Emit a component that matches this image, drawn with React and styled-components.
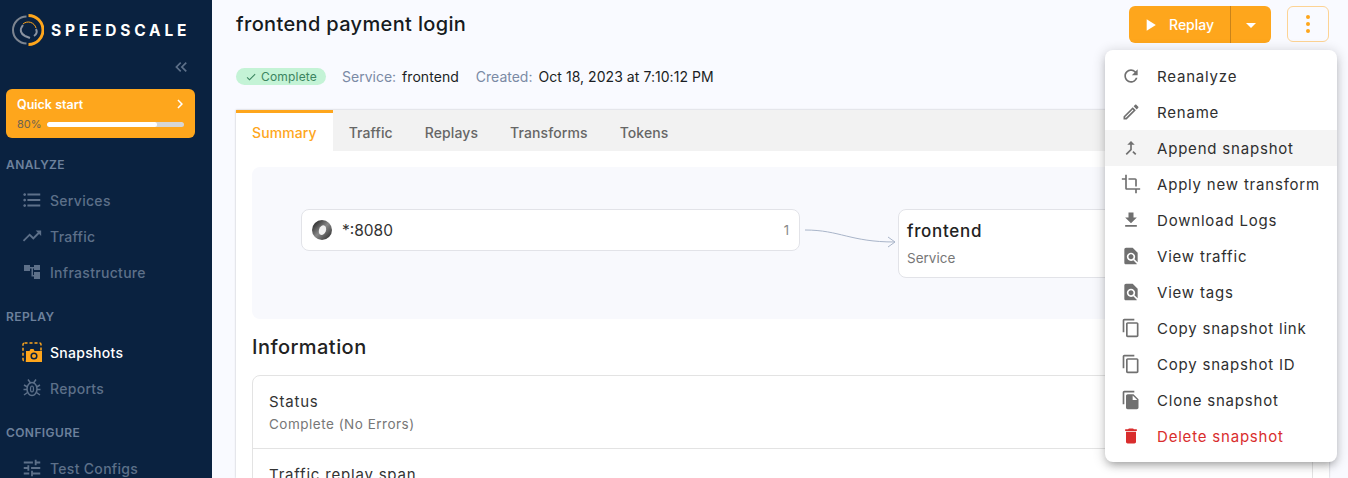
import React from 'react';
import styled, { createGlobalStyle } from 'styled-components';
import {
  MdRefresh, MdOutlineEdit, MdMergeType, MdCrop, MdFileDownload, MdFindInPage, MdContentCopy,
  MdFileCopy, MdDelete, MdFormatListBulleted, MdTrendingUp, MdTune, MdPlayArrow,
  MdArrowDropDown, MdCheck, MdKeyboardDoubleArrowLeft, MdChevronRight,
} from 'react-icons/md';

const Global = createGlobalStyle`
  html, body { margin: 0; padding: 0; height: 100%; overflow: hidden; }
  body { font-family: Inter, "Open Sans", "Liberation Sans", sans-serif; background: #f9faff; }
  * { box-sizing: border-box; }
`;

const Page = styled.div`
  display: flex;
  width: 1348px;
  height: 478px;
  overflow: hidden;
  position: relative;
`;

const Sidebar = styled.aside`
  width: 212px;
  flex: none;
  background: #0a2240;
  padding: 0 6px;
  display: flex;
  flex-direction: column;
  overflow: hidden;
`;

const LogoRow = styled.div`
  height: 60px;
  flex: none;
  padding-left: 6px;
  display: flex;
  align-items: center;
  gap: 7px;
`;

const LogoText = styled.span`
  color: #fff;
  font-size: 15.5px;
  font-weight: 700;
  letter-spacing: 3.8px;
  white-space: nowrap;
`;

const CollapseRow = styled.div`
  display: flex;
  flex: none;
  justify-content: flex-end;
  padding-right: 15px;
  height: 32px;
  margin-top: -3px;
  color: #5d7089;
  font-size: 20px;
  align-items: flex-start;
`;

const QuickStart = styled.div`
  width: 189px;
  height: 49px;
  flex: none;
  background: #fea61c;
  border-radius: 6px;
  padding: 7px 11px;
  display: flex;
  flex-direction: column;
  gap: 5px;
`;

const QuickTop = styled.div`
  display: flex;
  justify-content: space-between;
  align-items: center;
  color: #fff;
  font-size: 12.5px;
  font-weight: 600;
  height: 16px;
`;

const QuickBottom = styled.div`
  display: flex;
  align-items: center;
  gap: 5px;
  font-size: 11px;
  color: #6d6350;
`;

const Track = styled.div`
  flex: 1;
  height: 5px;
  border-radius: 3px;
  background: #d6d6d6;
  overflow: hidden;
`;

const Fill = styled.div`
  height: 100%;
  border-radius: 3px;
  background: #fff;
`;

const SectionLabel = styled.div`
  color: #6d819c;
  font-size: 12px;
  font-weight: 600;
  letter-spacing: 0.4px;
  height: 16px;
  flex: none;
  line-height: 16px;
  margin-top: ${(p) => p.$top}px;
  margin-bottom: 9px;
`;

const NavItem = styled.div`
  height: 36px;
  flex: none;
  display: flex;
  align-items: center;
  padding-left: 16px;
  gap: 8px;
  font-size: 14px;
  letter-spacing: 0.3px;
  font-weight: 500;
  color: ${(p) => (p.$active ? '#fff' : '#5d7089')};
`;

const NavIcon = styled.span`
  width: 20px;
  height: 20px;
  display: flex;
  align-items: center;
  justify-content: center;
  font-size: 22px;
  flex: none;
`;

const Main = styled.main`
  flex: 1;
  padding: 0 19px 0 24px;
  display: flex;
  flex-direction: column;
  min-width: 0;
`;

const Header = styled.header`
  height: 50px;
  flex: none;
  padding-top: 6px;
  display: flex;
  justify-content: space-between;
  align-items: flex-start;
`;

const Title = styled.h1`
  margin: 0;
  font-size: 20px;
  letter-spacing: 0.35px;
  font-weight: 500;
  line-height: 37px;
  color: #161a20;
`;

const Actions = styled.div`
  display: flex;
  gap: 16px;
`;

const SplitButton = styled.div`
  width: 142px;
  height: 37px;
  display: flex;
  background: #fea61c;
  border-radius: 6px;
  color: #fff;
`;

const ReplayPart = styled.div`
  width: 102px;
  display: flex;
  align-items: center;
  padding-left: 11px;
  gap: 9px;
  font-size: 14px;
  font-weight: 500;
  border-right: 1px solid #c9831a;
`;

const CaretPart = styled.div`
  flex: 1;
  display: flex;
  align-items: center;
  justify-content: center;
  font-size: 24px;
`;

const KebabButton = styled.div`
  width: 42px;
  height: 36px;
  border: 1px solid #fdd394;
  border-radius: 6px;
  display: flex;
  flex-direction: column;
  align-items: center;
  justify-content: center;
  gap: 3px;
`;

const Dot = styled.span`
  width: 4px;
  height: 4px;
  border-radius: 50%;
  background: #fea61c;
`;

const MetaRow = styled.div`
  margin-top: 18px;
  height: 17px;
  flex: none;
  display: flex;
  align-items: center;
  font-size: 14px;
`;

const Chip = styled.span`
  width: 90px;
  height: 17px;
  border-radius: 9px;
  background: #c4f3d6;
  color: #3b8560;
  font-size: 12px;
  letter-spacing: 0.2px;
  display: flex;
  align-items: center;
  justify-content: center;
  gap: 4px;
  margin-right: 16px;
`;

const MetaLabel = styled.span`
  color: #7b8aa5;
  margin-right: 6px;
`;

const MetaValue = styled.span`
  color: #1b1e24;
  letter-spacing: 0.05px;
  margin-right: 17px;
`;

const TabsBox = styled.section`
  margin-top: 25px;
  width: 1093px;
  flex: 1;
  background: #fff;
  box-shadow: 0 0 2px rgba(0, 0, 0, 0.25);
  min-height: 0;
`;

const TabBar = styled.div`
  height: 41px;
  background: #f2f2f2;
  display: flex;
`;

const Tab = styled.div`
  padding: 0 16px;
  display: flex;
  align-items: center;
  font-size: 14px;
  letter-spacing: 0.1px;
  font-weight: 500;
  color: ${(p) => (p.$active ? '#fea61c' : '#666')};
  background: ${(p) => (p.$active ? '#fff' : 'transparent')};
  border-top: 3px solid ${(p) => (p.$active ? '#fea61c' : 'transparent')};
`;

const TabBody = styled.div`
  padding: 16px 16px 0;
`;

const GraphPanel = styled.div`
  height: 152px;
  border-radius: 8px;
  background: #f8f9fd;
  padding: 42px 0 0 49px;
  display: flex;
  align-items: flex-start;
  overflow: hidden;
`;

const SourceNode = styled.div`
  width: 499px;
  height: 42px;
  flex: none;
  background: #fff;
  border: 1px solid #e2e3e8;
  border-radius: 8px;
  display: flex;
  align-items: center;
  padding: 0 10px;
  gap: 10px;
  font-size: 15.5px;
  color: #333;
`;

const NodeCount = styled.span`
  margin-left: auto;
  font-size: 13px;
  color: #888;
`;

const ServiceNode = styled.div`
  width: 400px;
  height: 69px;
  flex: none;
  background: #fff;
  border: 1px solid #e2e3e8;
  border-radius: 8px;
  padding: 11px 8px;
`;

const NodeName = styled.div`
  font-size: 17px;
  letter-spacing: 0.7px;
  font-weight: 500;
  color: #222;
  line-height: 20px;
`;

const NodeKind = styled.div`
  font-size: 13.5px;
  color: #777;
  margin-top: 9px;
  line-height: 16px;
`;

const Heading = styled.h2`
  margin: 16px 0 0;
  font-size: 20px;
  letter-spacing: 0.45px;
  font-weight: 500;
  line-height: 24px;
  color: #222;
`;

const InfoCard = styled.div`
  margin-top: 16px;
  border: 1px solid #e3e3e3;
  border-radius: 8px 8px 0 0;
`;

const InfoRow = styled.div`
  height: 73px;
  padding: 16px 16px 0;
  border-bottom: 1px solid #e3e3e3;
`;

const InfoName = styled.div`
  font-size: 15px;
  letter-spacing: 0.8px;
  line-height: 20px;
  color: #333;
`;

const InfoValue = styled.div`
  font-size: 13.5px;
  letter-spacing: 0.5px;
  line-height: 18px;
  margin-top: 3px;
  color: #777;
`;

const Menu = styled.ul`
  position: absolute;
  left: 1105px;
  top: 50px;
  width: 232px;
  margin: 0;
  padding: 8px 0;
  list-style: none;
  background: #fff;
  border-radius: 8px;
  box-shadow: 0 5px 8px -3px rgba(0, 0, 0, 0.3), 0 2px 12px 2px rgba(0, 0, 0, 0.14);
`;

const MenuRow = styled.li`
  height: 36px;
  display: flex;
  align-items: center;
  padding-left: 16px;
  font-size: 15px;
  letter-spacing: 0.8px;
  white-space: nowrap;
  color: ${(p) => (p.$danger ? '#d92d2d' : '#2f2f2f')};
  background: ${(p) => (p.$hover ? '#f4f4f4' : 'transparent')};
`;

const MenuIcon = styled.span`
  width: 36px;
  flex: none;
  display: flex;
  font-size: 20px;
  color: ${(p) => (p.$danger ? '#d92d2d' : '#707070')};
`;

function Logo() {
  return (
    <svg width="32" height="32" viewBox="0 0 32 32" fill="none" style={{ flex: 'none' }}>
      <path d="M14.5 2.5 A13.5 13.5 0 0 0 14.5 29.5" stroke="#7d8590" strokeWidth="2" />
      <path d="M16.5 1.5 A14.5 14.5 0 0 1 16.5 30.5" stroke="#fea61c" strokeWidth="3" />
      <path d="M11 10 A8 8 0 0 1 24 14" stroke="#fea61c" strokeWidth="1" />
      <path d="M11 11 C7 16 9 20 13 22 M13 22 L18 24 M22 22 C25 20 25 17 24 15" stroke="#8a93a0" strokeWidth="2" />
    </svg>
  );
}

function InfraIcon() {
  return (
    <svg width="18" height="18" viewBox="0 0 18 18" fill="#5d7089" style={{ flex: 'none' }}>
      <rect x="1" y="2" width="6" height="6" />
      <rect x="11" y="2" width="6" height="5" />
      <rect x="11" y="9" width="6" height="7" />
      <path d="M7 4h4v1.500H10V12h1v1.500H8.500V5.500H7z" />
    </svg>
  );
}

function BugIcon() {
  return (
    <svg width="18" height="20" viewBox="0 0 18 20" fill="none" stroke="#5d7089" strokeWidth="1.500" style={{ flex: 'none' }}>
      <ellipse cx="9" cy="11" rx="5" ry="6.500" />
      <path d="M5 1.500l2.500 3.500M13 1.500l-2.500 3.500M1 7l3.500 2M17 7l-3.500 2M0.500 11.500h3.500M17.500 11.500h-3.500M1 17l3.500-2.500M17 17l-3.500-2.500" />
      <ellipse cx="9" cy="11" rx="1.500" ry="3" strokeWidth="1.200" />
    </svg>
  );
}

function SnapshotIcon() {
  return (
    <svg width="20" height="20" viewBox="0 0 20 20" fill="none" style={{ flex: 'none' }}>
      <rect x="1" y="1" width="18" height="18" rx="1.500" stroke="#fea61c" strokeWidth="1.500" strokeDasharray="3 2" />
      <path d="M4 9h3.500l1-2h3l1 2H20v11H4z" fill="#fea61c" />
      <circle cx="12" cy="14" r="2.800" fill="none" stroke="#0a2240" strokeWidth="1.500" />
    </svg>
  );
}

function JsonIcon() {
  return (
    <svg width="20" height="20" viewBox="0 0 20 20" style={{ flex: 'none' }}>
      <defs>
        <linearGradient id="ring" x1="0" y1="0" x2="1" y2="1">
          <stop offset="0" stopColor="#111" />
          <stop offset="0.5" stopColor="#888" />
          <stop offset="1" stopColor="#222" />
        </linearGradient>
      </defs>
      <circle cx="10" cy="10" r="10" fill="url(#ring)" />
      <ellipse cx="10.500" cy="10" rx="3.500" ry="5" transform="rotate(20 10 10)" fill="#f0f0f0" />
    </svg>
  );
}

const menuItems = [
  { label: 'Reanalyze', icon: MdRefresh },
  { label: 'Rename', icon: MdOutlineEdit },
  { label: 'Append snapshot', icon: MdMergeType, hover: true },
  { label: 'Apply new transform', icon: MdCrop },
  { label: 'Download Logs', icon: MdFileDownload },
  { label: 'View traffic', icon: MdFindInPage },
  { label: 'View tags', icon: MdFindInPage },
  { label: 'Copy snapshot link', icon: MdContentCopy },
  { label: 'Copy snapshot ID', icon: MdContentCopy },
  { label: 'Clone snapshot', icon: MdFileCopy },
  { label: 'Delete snapshot', icon: MdDelete, danger: true },
];

export default function App() {
  return (
    <Page>
      <Global />
      <Sidebar>
        <LogoRow>
          <Logo />
          <LogoText>SPEEDSCALE</LogoText>
        </LogoRow>
        <CollapseRow><MdKeyboardDoubleArrowLeft /></CollapseRow>
        <QuickStart>
          <QuickTop>
            Quick start
            <MdChevronRight size={18} style={{ marginRight: -5 }} />
          </QuickTop>
          <QuickBottom>
            80%
            <Track><Fill style={{ width: '80%' }} /></Track>
          </QuickBottom>
        </QuickStart>
        <SectionLabel $top={19}>ANALYZE</SectionLabel>
        <NavItem><NavIcon><MdFormatListBulleted style={{ flex: 'none' }} /></NavIcon>Services</NavItem>
        <NavItem><NavIcon><MdTrendingUp style={{ flex: 'none' }} /></NavIcon>Traffic</NavItem>
        <NavItem><NavIcon><InfraIcon /></NavIcon>Infrastructure</NavItem>
        <SectionLabel $top={19}>REPLAY</SectionLabel>
        <NavItem $active><NavIcon><SnapshotIcon /></NavIcon>Snapshots</NavItem>
        <NavItem><NavIcon><BugIcon /></NavIcon>Reports</NavItem>
        <SectionLabel $top={19}>CONFIGURE</SectionLabel>
        <NavItem><NavIcon><MdTune style={{ flex: 'none' }} /></NavIcon>Test Configs</NavItem>
      </Sidebar>
      <Main>
        <Header>
          <Title>frontend payment login</Title>
          <Actions>
            <SplitButton>
              <ReplayPart><MdPlayArrow size={20} />Replay</ReplayPart>
              <CaretPart><MdArrowDropDown /></CaretPart>
            </SplitButton>
            <KebabButton><Dot /><Dot /><Dot /></KebabButton>
          </Actions>
        </Header>
        <MetaRow>
          <Chip><MdCheck size={12} />Complete</Chip>
          <MetaLabel>Service:</MetaLabel>
          <MetaValue>frontend</MetaValue>
          <MetaLabel>Created:</MetaLabel>
          <MetaValue>Oct 18, 2023 at 7:10:12 PM</MetaValue>
        </MetaRow>
        <TabsBox>
          <TabBar>
            <Tab $active>Summary</Tab>
            <Tab>Traffic</Tab>
            <Tab>Replays</Tab>
            <Tab>Transforms</Tab>
            <Tab>Tokens</Tab>
          </TabBar>
          <TabBody>
            <GraphPanel>
              <SourceNode>
                <JsonIcon />
                *:8080
                <NodeCount>1</NodeCount>
              </SourceNode>
              <svg width="98" height="42" viewBox="0 0 98 42" fill="none" stroke="#a9b5c9" style={{ flex: 'none' }}>
                <path d="M5 21 C40 21 50 33 95 33 M88 28 L95 33 L88 38" />
              </svg>
              <ServiceNode>
                <NodeName>frontend</NodeName>
                <NodeKind>Service</NodeKind>
              </ServiceNode>
            </GraphPanel>
            <Heading>Information</Heading>
            <InfoCard>
              <InfoRow>
                <InfoName>Status</InfoName>
                <InfoValue>Complete (No Errors)</InfoValue>
              </InfoRow>
              <InfoRow>
                <InfoName>Traffic replay span</InfoName>
              </InfoRow>
            </InfoCard>
          </TabBody>
        </TabsBox>
      </Main>
      <Menu>
        {menuItems.map(({ label, icon: Icon, hover, danger }) => (
          <MenuRow key={label} $hover={hover} $danger={danger}>
            <MenuIcon $danger={danger}><Icon /></MenuIcon>
            {label}
          </MenuRow>
        ))}
      </Menu>
    </Page>
  );
}
